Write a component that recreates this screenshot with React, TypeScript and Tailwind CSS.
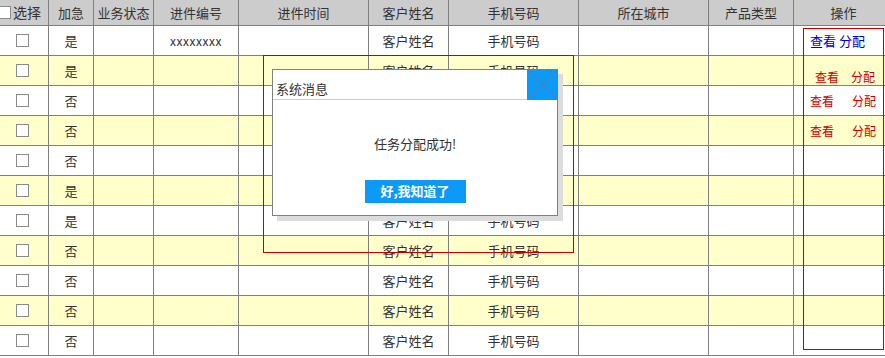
import type React from "react"

const cols = "grid grid-cols-[49px_45px_60px_85px_130px_80px_130px_130px_85px_100px]"

const rows = [
  { urgent: "是", code: "xxxxxxxx", ops: 1 },
  { urgent: "是", code: "", ops: 2 },
  { urgent: "否", code: "", ops: 3 },
  { urgent: "否", code: "", ops: 3 },
  { urgent: "否", code: "", ops: 0 },
  { urgent: "是", code: "", ops: 0 },
  { urgent: "是", code: "", ops: 0 },
  { urgent: "否", code: "", ops: 0 },
  { urgent: "否", code: "", ops: 0 },
  { urgent: "否", code: "", ops: 0 },
  { urgent: "否", code: "", ops: 0 },
]

const headers = ["加急", "业务状态", "进件编号", "进件时间", "客户姓名", "手机号码", "所在城市", "产品类型", "操作"]

function Box() {
  return <div className="h-[13px] w-[13px] border border-[#8a8a8a] bg-white" />
}

function Cell({ children, className = "" }: { children?: React.ReactNode; className?: string }) {
  return (
    <div className={"flex items-center justify-center border-b border-r border-[#7f7f7f] " + className}>
      {children}
    </div>
  )
}

function Ops({ kind }: { kind: number }) {
  if (kind === 1)
    return (
      <div className="flex h-full w-full items-center pl-[16px] text-[13px] text-[#0000cc]">
        查看&nbsp;分配
      </div>
    )
  if (kind === 2)
    return (
      <div className="flex h-full w-full items-end gap-[12px] pl-[21px] text-[12px] leading-[16px] text-[#cc0000]">
        <span>查看</span>
        <span>分配</span>
      </div>
    )
  if (kind === 3)
    return (
      <div className="flex h-full w-full items-center gap-[18px] pl-[16px] text-[12px] text-[#cc0000]">
        <span>查看</span>
        <span>分配</span>
      </div>
    )
  return null
}

export default function App() {
  return (
    <main
      className="relative h-[358px] w-[885px] overflow-hidden bg-white text-[13px] text-[#333]"
      style={{ fontFamily: '"Microsoft YaHei", "Noto Sans CJK SC", sans-serif' }}
    >
      <div className="w-[913px]">
        <div className={cols + " h-[26px] bg-[#cccccc]"}>
          <Cell className="justify-start">
            <div className="ml-[-2px] mr-[2px] h-[13px] w-[13px] border border-[#8a8a8a] bg-white" />
            <span className="text-[14px]">选择</span>
          </Cell>
          {headers.map((h) => (
            <Cell key={h}>{h}</Cell>
          ))}
        </div>
        {rows.map((r, i) => (
          <div key={i} className={cols + " h-[30px] " + (i % 2 ? "bg-[#ffffcc]" : "bg-white")}>
            <Cell className="pb-[1px] pr-[3px]">
              <Box />
            </Cell>
            <Cell>{r.urgent}</Cell>
            <Cell />
            <Cell className="text-[12px] tracking-[0.5px]">{r.code}</Cell>
            <Cell />
            <Cell>客户姓名</Cell>
            <Cell>手机号码</Cell>
            <Cell />
            <Cell />
            <Cell className="justify-start">
              <Ops kind={r.ops} />
            </Cell>
          </div>
        ))}
      </div>

      {/* red outline round the dialog */}
      <div className="absolute left-[263px] top-[55px] h-[198px] w-[311px] border border-[#c40000]" />
      {/* red outline round the action column */}
      <div className="absolute left-[803px] top-[28px] h-[322px] w-[81px] border border-[#c40000]" />

      {/* dialog */}
      <div className="absolute left-[272px] top-[69px] h-[147px] w-[286px] border border-[#808080] bg-white shadow-[5px_5px_0_#dcdcdc]">
        <div className="flex h-[30px] items-end border-b border-[#cccccc] pb-[1px] pl-[3px]">
          <span className="text-[13px] leading-[18px]">系统消息</span>
        </div>
        <button className="absolute right-[-1px] top-[-1px] h-[31px] w-[31px] bg-[#0d99f7]">
          <svg width="31" height="31" viewBox="0 0 31 31" className="block">
            <path d="M2 2L29 29M29 2L2 29" stroke="#3f82c0" strokeWidth="1" fill="none" />
          </svg>
        </button>
        <div className="mt-[34px] text-center text-[13px]">任务分配成功!</div>
        <div className="mt-[26px] flex justify-center">
          <div className="flex h-[23px] w-[101px] items-center justify-center bg-[#0d99f7] text-[13px] font-bold text-white">
            好,我知道了
          </div>
        </div>
      </div>
    </main>
  )
}
